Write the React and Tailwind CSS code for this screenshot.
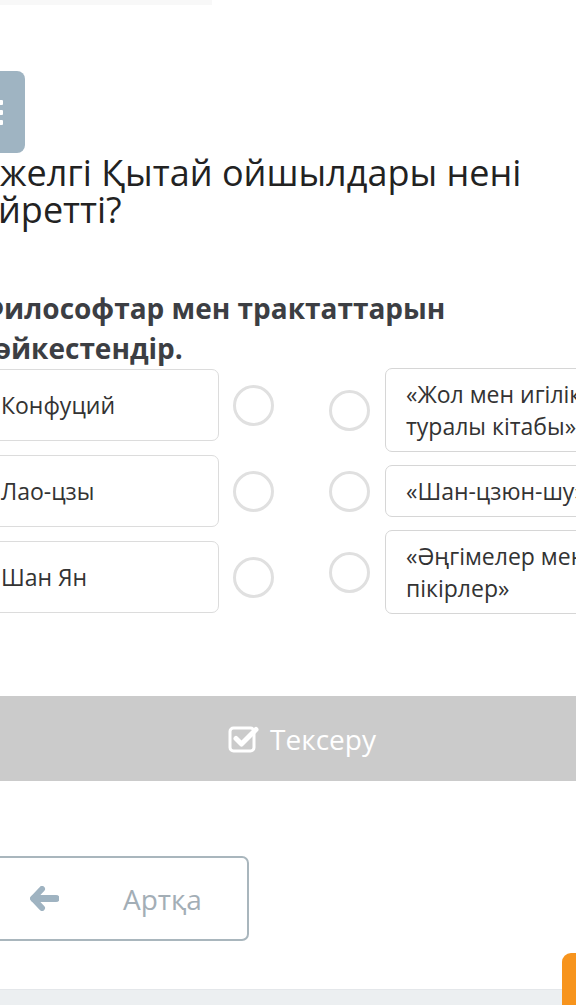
import React from "react";

const lefts = ["Конфуций", "Лао-цзы", "Шан Ян"];
const rights = [
  "«Жол мен игілік туралы кітабы»",
  "«Шан-цзюн-шу»",
  "«Әңгімелер мен пікірлер»",
];

const Circle = () => (
  <div className="w-[41px] h-[41px] shrink-0 rounded-full border-[3px] border-[#e0e0e0] bg-white"></div>
);

const CheckSquare = () => (
  <svg width="31" height="28" viewBox="0 0 31 28" fill="none">
    <rect x="2" y="3" width="24" height="23" rx="3.5" stroke="white" strokeWidth="3" />
    <path d="M8 13.5l5.5 5.5L28 4.5" stroke="white" strokeWidth="5" strokeLinecap="round" strokeLinejoin="round" />
  </svg>
);

const ArrowLeft = () => (
  <svg width="29" height="25" viewBox="0 0 29 25" fill="none">
    <path d="M12 3L3 12.5l9 9.5" stroke="#9fb3c1" strokeWidth="6" strokeLinecap="round" strokeLinejoin="round" />
    <path d="M4 12.5h22" stroke="#9fb3c1" strokeWidth="7" strokeLinecap="round" />
  </svg>
);

export default function App() {
  return (
    <div className="w-[576px] h-[1005px] overflow-hidden bg-white relative font-['Open_Sans',sans-serif]">
      <div className="-ml-[20px] w-[644px] flex flex-col">
        <div className="h-[5px] w-[232px] bg-[#f8f8f8]"></div>

        <div className="mt-[66px] w-[45px] h-[82px] rounded-[8px] bg-[#9fb4c2] flex flex-col justify-center gap-[5px] pl-[8px]">
          <div className="w-[15px] h-[5px] bg-white rounded-[1px]"></div>
          <div className="w-[15px] h-[5px] bg-white rounded-[1px]"></div>
          <div className="w-[15px] h-[5px] bg-white rounded-[1px]"></div>
        </div>

        <h1 className="text-[36px] leading-[37px] text-[#222] font-normal mt-[1px] w-[600px]">
          Ежелгі Қытай ойшылдары нені үйретті?
        </h1>

        <h2 className="mt-[60px] text-[28px] leading-[40px] font-bold text-[#3c3e43] w-[560px]">
          Философтар мен трактаттарын сәйкестендір.
        </h2>

        <div className="mt-[1px] flex justify-between items-start">
          <div className="flex flex-col gap-[14px]">
            {lefts.map((t) => (
              <div key={t} className="flex items-center gap-[14px]">
                <div className="w-[239px] h-[72px] flex items-center px-[20px] border-[1.5px] border-[#dcdcdc] rounded-[7px] text-[23px] text-[#333]">
                  {t}
                </div>
                <Circle />
              </div>
            ))}
          </div>
          <div className="flex flex-col gap-[13px] -mt-[1px]">
            {rights.map((t) => (
              <div key={t} className="flex items-center gap-[15px]">
                <Circle />
                <div className="w-[239px] py-[9px] px-[20px] border border-[#d6d6d6] rounded-[7px] text-[23px] leading-[32px] text-[#333]">
                  {t}
                </div>
              </div>
            ))}
          </div>
        </div>

        <div className="mt-[82px] h-[85px] rounded-[7px] bg-[#cbcbcb] flex items-center justify-center gap-[11px] text-white text-[28px]">
          <CheckSquare />
          <span>Тексеру</span>
        </div>

        <div className="mt-[75px] w-[269px] h-[85px] rounded-[7px] border-2 border-[#a9b6bd] flex items-center pl-[48px] text-[28px] text-[#a3aeb6]">
          <ArrowLeft />
          <span className="ml-[64px]">Артқа</span>
        </div>
      </div>

      <div className="absolute left-0 right-0 bottom-0 h-[16px] bg-[#eceff1] border-t border-[#e4e7ea]"></div>
      <div className="absolute left-[562px] top-[953px] w-[40px] h-[60px] rounded-tl-[9px] bg-[#f7941d]"></div>
    </div>
  );
}
